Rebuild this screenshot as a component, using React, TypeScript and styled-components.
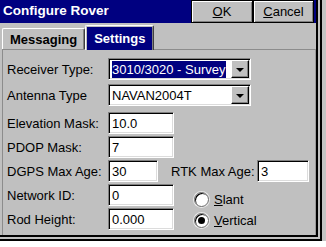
import React from 'react';
import styled, { createGlobalStyle } from 'styled-components';

const Global = createGlobalStyle`
  html, body { margin: 0; padding: 0; background: #fff; }
  body { font-family: "Liberation Sans", Arial, sans-serif; font-size: 13px; color: #000; }
  * { box-sizing: border-box; }
`;

const Screen = styled.div`
  width: 326px;
  height: 247px;
  display: flex;
  flex-direction: column;
  background: #fff;
  overflow: hidden;
`;

const Desk = styled.div`
  height: 241px;
  display: flex;
  background: #c4c4c4;
`;

const Frame = styled.div`
  width: 322px;
  display: flex;
  background: #c0c0c0;
  border-right: 2px solid #000;
  border-bottom: 2px solid #000;
  padding: 0 2px 2px 0;
`;

const Window = styled.div`
  flex: 1;
  display: flex;
  flex-direction: column;
  background: #c0c0c0;
  border-right: 2px solid #000;
  border-bottom: 2px solid #000;
`;

const TitleBar = styled.div`
  height: 23px;
  display: flex;
  align-items: stretch;
  background: #000080;
  padding-right: 2px;
`;

const Title = styled.div`
  flex: 1;
  color: #fff;
  font-weight: bold;
  font-size: 13.5px;
  line-height: 22px;
  padding-left: 3px;
`;

const TitleButton = styled.button<{ $w: number }>`
  width: ${(p) => p.$w}px;
  height: 23px;
  margin: 0;
  padding: 0;
  background: #c0c0c0;
  border: 1px solid #000;
  box-shadow: inset 1px 1px #fff, inset -1px -1px #808080;
  font-family: inherit;
  font-size: 13px;
  color: #000;
  display: flex;
  align-items: center;
  justify-content: center;
  & u { text-decoration: underline; }
`;

const TabStrip = styled.div`
  height: 26px;
  display: flex;
  align-items: flex-end;
  padding-left: 2px;
  position: relative;
  z-index: 1;
`;

const Tab = styled.div<{ $active?: boolean }>`
  height: ${(p) => (p.$active ? 25 : 21)}px;
  margin-bottom: ${(p) => (p.$active ? -1 : 0)}px;
  padding: 0 ${(p) => (p.$active ? 8 : 7)}px;
  display: flex;
  align-items: center;
  font-weight: bold;
  font-size: 13px;
  color: ${(p) => (p.$active ? '#fff' : '#000')};
  background: ${(p) => (p.$active ? '#000080' : '#c0c0c0')};
  border-top: 1px solid #fff;
  border-left: 1px solid #fff;
  border-right: 1px solid #404040;
  border-radius: 2px 2px 0 0;
  box-shadow: ${(p) =>
    p.$active
      ? 'inset 0 1px 0 #c0c0c0, inset 1px 0 0 #c0c0c0, inset -1px 0 0 #808080'
      : 'inset -1px 0 0 #808080'};
`;

const Panel = styled.div`
  flex: 1;
  margin-left: 2px;
  border-top: 1px solid #8c8c8c;
  border-left: 1px solid #8c8c8c;
  border-right: 1px solid #9a9a9a;
  padding: 8px 0 0 4px;
  display: flex;
  flex-direction: column;
`;

const Row = styled.div<{ $top?: number }>`
  height: 22px;
  margin-top: ${(p) => p.$top ?? 2}px;
  display: flex;
  align-items: center;
`;

const Label = styled.div`
  width: 101px;
  flex: none;
  white-space: nowrap;
  font-size: 13px;
`;

const SideLabel = styled.div`
  width: 99px;
  flex: none;
  padding-left: 13px;
  white-space: nowrap;
  font-size: 13px;
`;

const sunken = `
  border: 1px solid;
  border-color: #808080 #fff #fff #808080;
  box-shadow: inset 1px 1px #000, inset -1px -1px #dcdcdc;
  background: #fff;
`;

const Edit = styled.div<{ $w: number }>`
  ${sunken}
  width: ${(p) => p.$w}px;
  height: 22px;
  padding: 0 0 0 3px;
  display: flex;
  align-items: center;
  font-size: 13px;
`;

const Combo = styled.div`
  ${sunken}
  width: 143px;
  height: 22px;
  padding: 1px;
  display: flex;
  align-items: stretch;
`;

const ComboText = styled.div`
  flex: 1;
  display: flex;
  align-items: center;
  font-size: 13px;
  padding-left: 2px;
  white-space: nowrap;
  overflow: hidden;
`;

const Highlight = styled.span`
  background: #000080;
  color: #fff;
  padding: 1px 1px 1px 0;
`;

const DropButton = styled.div`
  width: 18px;
  flex: none;
  background: #c0c0c0;
  border: 1px solid;
  border-color: #fff #000 #000 #fff;
  box-shadow: inset -1px -1px #808080;
  display: flex;
  align-items: center;
  justify-content: center;
`;

const Arrow = styled.div`
  width: 0;
  height: 0;
  border-left: 4px solid transparent;
  border-right: 4px solid transparent;
  border-top: 4px solid #000;
  margin-top: 1px;
`;

const Split = styled.div`
  display: flex;
  align-items: flex-start;
`;

const LeftCol = styled.div`
  display: flex;
  flex-direction: column;
`;

const RadioGroup = styled.div`
  display: flex;
  flex-direction: column;
  gap: 7px;
  margin: 10px 0 0 20px;
`;

const RadioRow = styled.div`
  display: flex;
  align-items: center;
  gap: 5px;
  height: 14px;
  font-size: 13px;
`;

const RadioCircle = styled.div<{ $on?: boolean }>`
  width: 15px;
  height: 15px;
  border-radius: 50%;
  background: #fff;
  border: 1px solid #6a6a6a;
  box-shadow: inset 1px 1px #000, 0 0 0 1px #e8e8e8;
  display: flex;
  align-items: center;
  justify-content: center;
  &::after {
    content: '';
    display: ${(p) => (p.$on ? 'block' : 'none')};
    width: 7px;
    height: 7px;
    border-radius: 50%;
    background: #000;
  }
`;

export default function App() {
  return (
    <>
      <Global />
      <Screen>
        <Desk>
          <Frame>
            <Window>
              <TitleBar>
                <Title>Configure Rover</Title>
                <TitleButton $w={62}>
                  <u>O</u>K
                </TitleButton>
                <TitleButton $w={61}>
                  <u>C</u>ancel
                </TitleButton>
              </TitleBar>
              <TabStrip>
                <Tab>Messaging</Tab>
                <Tab $active>Settings</Tab>
              </TabStrip>
              <Panel>
                <Row $top={0}>
                  <Label>Receiver Type:</Label>
                  <Combo>
                    <ComboText>
                      <Highlight>3010/3020 - Survey</Highlight>
                    </ComboText>
                    <DropButton>
                      <Arrow />
                    </DropButton>
                  </Combo>
                </Row>
                <Row $top={4}>
                  <Label>Antenna Type</Label>
                  <Combo>
                    <ComboText>NAVAN2004T</ComboText>
                    <DropButton>
                      <Arrow />
                    </DropButton>
                  </Combo>
                </Row>
                <Row $top={6}>
                  <Label>Elevation Mask:</Label>
                  <Edit $w={66}>10.0</Edit>
                </Row>
                <Row>
                  <Label>PDOP Mask:</Label>
                  <Edit $w={66}>7</Edit>
                </Row>
                <Row>
                  <Label>DGPS Max Age:</Label>
                  <Edit $w={50}>30</Edit>
                  <SideLabel>RTK Max Age:</SideLabel>
                  <Edit $w={52}>3</Edit>
                </Row>
                <Split>
                  <LeftCol>
                    <Row>
                      <Label>Network ID:</Label>
                      <Edit $w={66}>0</Edit>
                    </Row>
                    <Row>
                      <Label>Rod Height:</Label>
                      <Edit $w={66}>0.000</Edit>
                    </Row>
                  </LeftCol>
                  <RadioGroup>
                    <RadioRow>
                      <RadioCircle />
                      <span>
                        <u>S</u>lant
                      </span>
                    </RadioRow>
                    <RadioRow>
                      <RadioCircle $on />
                      <span>
                        <u>V</u>ertical
                      </span>
                    </RadioRow>
                  </RadioGroup>
                </Split>
              </Panel>
            </Window>
          </Frame>
        </Desk>
      </Screen>
    </>
  );
}
